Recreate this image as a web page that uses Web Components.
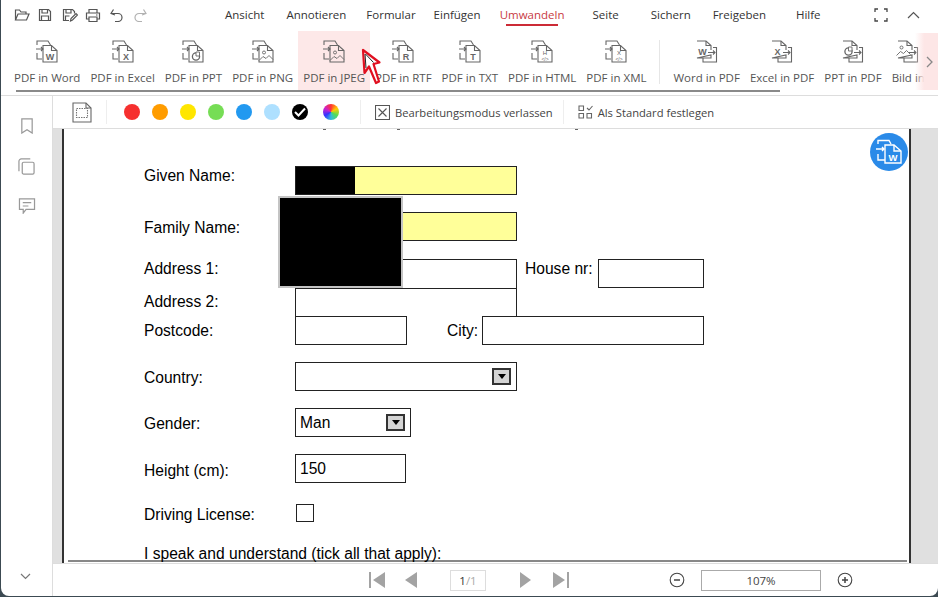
<!DOCTYPE html>
<html lang="de">
<head>
<meta charset="utf-8">
<title>PDF</title>
<style>
  html, body { margin: 0; height: 597px; overflow: hidden; background: #3c4a52; }
  body { font-family: "Open Sans", "Liberation Sans", sans-serif; font-size: 11.5px; color: #444; }
</style>
</head>
<body>
<app-window>
  <top-bar>
    <menu-tab style="margin-left:9px">Ansicht</menu-tab>
    <menu-tab style="margin-left:22px">Annotieren</menu-tab>
    <menu-tab style="margin-left:20px">Formular</menu-tab>
    <menu-tab style="margin-left:18px">Einfügen</menu-tab>
    <menu-tab style="margin-left:19px" active>Umwandeln</menu-tab>
    <menu-tab style="margin-left:28px">Seite</menu-tab>
    <menu-tab style="margin-left:32px">Sichern</menu-tab>
    <menu-tab style="margin-left:22px">Freigeben</menu-tab>
    <menu-tab style="margin-left:30px">Hilfe</menu-tab>
  </top-bar>
  <convert-ribbon>
    <ribbon-item glyph="W">PDF in Word</ribbon-item>
    <ribbon-item glyph="X">PDF in Excel</ribbon-item>
    <ribbon-item glyph="ppt">PDF in PPT</ribbon-item>
    <ribbon-item glyph="img">PDF in PNG</ribbon-item>
    <ribbon-item glyph="img" active>PDF in JPEG</ribbon-item>
    <ribbon-item glyph="R">PDF in RTF</ribbon-item>
    <ribbon-item glyph="T">PDF in TXT</ribbon-item>
    <ribbon-item glyph="code" mark="H">PDF in HTML</ribbon-item>
    <ribbon-item glyph="code" mark="X">PDF in XML</ribbon-item>
    <ribbon-sep></ribbon-sep>
    <ribbon-item glyph="W" reverse>Word in PDF</ribbon-item>
    <ribbon-item glyph="X" reverse>Excel in PDF</ribbon-item>
    <ribbon-item glyph="ppt" reverse>PPT in PDF</ribbon-item>
    <ribbon-item glyph="img" reverse>Bild in</ribbon-item>
  </convert-ribbon>
  <work-area>
    <side-rail slot="rail"></side-rail>
    <edit-toolbar></edit-toolbar>
    <doc-view>
      <form-row style="height:29px" shift="10">Given Name:
        <form-field slot="fields" width="222" fill="#ffff99"><span style="display:block;width:59px;height:100%;background:#000"></span></form-field>
      </form-row>
      <form-row style="height:29px;margin-top:17px" shift="-2">Family Name:
        <form-field slot="fields" width="222" fill="#ffff99"></form-field>
      </form-row>
      <form-row style="height:29px;margin-top:18px" shift="10">Address 1:
        <form-field slot="fields" width="222" open></form-field>
        <form-label slot="fields" style="margin-left:8px;width:73px" shift="10">House nr:</form-label>
        <form-field slot="fields" width="106"></form-field>
      </form-row>
      <form-row style="height:28px">Address 2:
        <form-field slot="fields" width="222" open></form-field>
      </form-row>
      <form-row style="height:29px">Postcode:
        <form-field slot="fields" width="112"></form-field>
        <form-label slot="fields" style="margin-left:40px;width:35px">City:</form-label>
        <form-field slot="fields" width="222"></form-field>
      </form-row>
      <form-row style="height:29px;margin-top:17px" shift="-2">Country:
        <form-field slot="fields" width="222" select></form-field>
      </form-row>
      <form-row style="height:29px;margin-top:17px" shift="-2">Gender:
        <form-field slot="fields" width="116" select>Man</form-field>
      </form-row>
      <form-row style="height:29px;margin-top:17px" shift="-4">Height (cm):
        <form-field slot="fields" width="111">150</form-field>
      </form-row>
      <form-row style="height:18px;margin-top:21px" shift="-4">Driving License:
        <form-field slot="fields" width="18" style="margin-left:1px"></form-field>
      </form-row>
      <form-row style="height:18px;margin-top:23px">I speak and understand (tick all that apply):</form-row>
    </doc-view>
    <pager-bar></pager-bar>
  </work-area>
  <red-cursor></red-cursor>
</app-window>

<script>
const STROKE = '#666';

// document glyphs that sit on the page of a convert icon
function glyphSvg(kind, mark, x, y) {
  if (kind === 'ppt') {
    return `<circle cx="${x}" cy="${y - 3}" r="3.6" fill="none" stroke="${STROKE}" stroke-width="1.3"/>
      <path d="M${x} ${y - 7.5}h3.500v4h-3.500z" fill="#fff" stroke="${STROKE}" stroke-width=".9"/>`;
  }
  if (kind === 'img') {
    return `<circle cx="${x - 2}" cy="${y - 7}" r="1.5" fill="none" stroke="${STROKE}" stroke-width=".9"/>
      <path d="M${x - 7} ${y + 1}l4-4 3 2 3-3 4 4" fill="none" stroke="${STROKE}" stroke-width=".9"/>`;
  }
  if (kind === 'code') {
    return `<text x="${x}" y="${y - 5}" font-size="6" text-anchor="middle" fill="${STROKE}" stroke="none" font-family="Liberation Sans">${mark}</text>
      <text x="${x}" y="${y + 1}" font-size="5" text-anchor="middle" fill="${STROKE}" stroke="none" font-family="Liberation Sans">&lt;/&gt;</text>`;
  }
  return `<text x="${x}" y="${y}" font-size="9" font-weight="700" text-anchor="middle" fill="${STROKE}" stroke="none" font-family="Liberation Sans">${kind}</text>`;
}

function convertIcon(kind, mark, reverse) {
  const common = `width="24" height="24" viewBox="0 0 24 24" fill="none" stroke="${STROKE}" stroke-width="1.1"`;
  if (reverse) {
    return `<svg ${common}>
      <path d="M2 1h9l5 4.500V10M16 15v3H2z"/><path d="M11 1v4.500h5"/>
      <path d="M13 12.500h7M18 10.500l2 2-2 2"/>
      <path d="M18 7.500h3.500V22H8v-4"/>
      ${glyphSvg(kind, mark, 7.5, 14.5)}
    </svg>`;
  }
  return `<svg ${common}>
    <path d="M2 5V1h11l2.500 4M2 13v6h5"/>
    <path d="M1 9h7M6 7l2 2-2 2"/>
    <path d="M8 5.500h8.500l5.500 5V22H8z"/><path d="M16.500 5.500v5H22"/>
    ${glyphSvg(kind, mark, 15, 19.5)}
  </svg>`;
}

class AppWindow extends HTMLElement {
  constructor() {
    super();
    this.attachShadow({ mode: 'open' });
    this.shadowRoot.innerHTML = `
      <style>
        :host {
          display: flex;
          flex-direction: column;
          position: relative;
          width: 937px;
          height: 596px;
          margin-left: 1px;
          background: #fff;
          border-radius: 0 0 8px 8px;
          overflow: hidden;
        }
      </style>
      <slot></slot>`;
  }
}

class TopBar extends HTMLElement {
  constructor() {
    super();
    this.attachShadow({ mode: 'open' });
    const s = `fill="none" stroke="#555" stroke-width="1.2"`;
    this.shadowRoot.innerHTML = `
      <style>
        :host { display: flex; align-items: center; height: 30px; flex: none; }
        .quick { display: flex; align-items: center; width: 215px; padding-left: 13px; box-sizing: border-box; height: 100%; }
        .quick svg { display: block; flex: none; }
        .tabs { display: flex; height: 100%; }
        .win { margin-left: auto; display: flex; align-items: center; gap: 19px; padding-right: 18px; }
        svg { display: block; }
      </style>
      <div class="quick">
        <svg width="16" height="14" viewBox="0 0 16 14" ${s}><path d="M1.500 12V2h4l1.500 2h5v2M1.500 12l2.500-6h11l-2.500 6z"/></svg>
        <svg style="margin-left:8px" width="14" height="14" viewBox="0 0 14 14" ${s}><path d="M1.500 1.500h9l2 2v9h-11z"/><path d="M4 1.500v3.500h5.500v-3.500M3.500 12.500v-4.500h7v4.500"/></svg>
        <svg style="margin-left:10px" width="16" height="14" viewBox="0 0 16 14" ${s}><path d="M7 12.500H1.500v-11h9l2 2v2"/><path d="M4 1.500v3.500h5V1.500M3.500 12V8h4"/><path d="M8.500 13l.5-2.500 5-5 1.500 1.500-5 5z"/></svg>
        <svg style="margin-left:7px" width="16" height="15" viewBox="0 0 16 15" ${s}><path d="M4 5V1.500h8V5M4 11H1.500V5h13v6H12"/><path d="M4 9h8v4.500H4z"/><path d="M11 7h1.500"/></svg>
        <svg style="margin-left:9px" width="13" height="14" viewBox="0 0 13 14" ${s}><path d="M1 5.500h7a4 4 0 0 1 0 8H5M3.500 1.500L1 5.500 5 7"/></svg>
        <svg style="margin-left:11px;opacity:.45" width="13" height="14" viewBox="0 0 13 14" ${s}><path d="M12 5.500H5a4 4 0 0 0 0 8h3M9.500 1.500l2.500 4L8 7"/></svg>
      </div>
      <div class="tabs"><slot></slot></div>
      <div class="win">
        <svg width="14" height="14" viewBox="0 0 14 14" fill="none" stroke="#444" stroke-width="1.3"><path d="M1 4V1h3M10 1h3v3M13 10v3h-3M4 13H1v-3"/></svg>
        <svg width="13" height="8" viewBox="0 0 13 8" fill="none" stroke="#555" stroke-width="1.2"><path d="M1 7l5.500-5.500L12 7"/></svg>
      </div>`;
  }
}

class MenuTab extends HTMLElement {
  constructor() {
    super();
    this.attachShadow({ mode: 'open' });
    this.shadowRoot.innerHTML = `
      <style>
        :host { display: block; position: relative; line-height: 30px; color: #333; white-space: nowrap; }
        :host([active]) { color: #c83a44; }
        :host([active])::after {
          content: ""; position: absolute; left: 6px; right: 6px; top: 24px; height: 2px; background: #cc2b36;
        }
      </style>
      <slot></slot>`;
  }
}

class ConvertRibbon extends HTMLElement {
  constructor() {
    super();
    this.attachShadow({ mode: 'open' });
    this.shadowRoot.innerHTML = `
      <style>
        :host {
          display: flex;
          flex-direction: column;
          flex: none;
          position: relative;
          height: 66px;
          box-sizing: border-box;
          border-bottom: 1px solid #ddd;
          padding-top: 1px;
        }
        .row { display: flex; height: 59px; padding-left: 8px; overflow: hidden; }
        .bar { width: 764px; height: 2px; margin-left: 15px; background: #8a8a8a; flex: none; }
        .more {
          position: absolute; right: 0; top: 3px; width: 23px; height: 57px;
          display: flex; align-items: center; justify-content: flex-end; padding-right: 5px; box-sizing: border-box;
          background: linear-gradient(90deg, rgba(253,230,230,0), #fde6e6 40%);
        }
      </style>
      <div class="row"><slot></slot></div>
      <div class="bar"></div>
      <div class="more">
        <svg width="7" height="12" viewBox="0 0 7 12" fill="none" stroke="#888" stroke-width="1.3"><path d="M1 1l5 5-5 5"/></svg>
      </div>`;
  }
}

class RibbonItem extends HTMLElement {
  constructor() {
    super();
    this.attachShadow({ mode: 'open' });
  }
  connectedCallback() {
    const icon = convertIcon(this.getAttribute('glyph'), this.getAttribute('mark'), this.hasAttribute('reverse'));
    this.shadowRoot.innerHTML = `
      <style>
        :host {
          display: flex; flex-direction: column; align-items: center; flex: none;
          padding: 9px 5px 0; box-sizing: border-box; height: 59px;
          color: #555; white-space: nowrap;
        }
        :host([active]) { background: #fde8e8; }
        svg { display: block; margin-bottom: 6px; }
        .t { line-height: 16px; }
      </style>
      ${icon}<div class="t"><slot></slot></div>`;
  }
}

class RibbonSep extends HTMLElement {
  constructor() {
    super();
    this.attachShadow({ mode: 'open' });
    this.shadowRoot.innerHTML = `
      <style>
        :host { display: block; flex: none; width: 1px; height: 44px; margin: 9px 8px 0; background: #e6e6e6; }
      </style>`;
  }
}

class WorkArea extends HTMLElement {
  constructor() {
    super();
    this.attachShadow({ mode: 'open' });
    this.shadowRoot.innerHTML = `
      <style>
        :host { display: flex; flex: 1; min-height: 0; }
        .main { flex: 1; min-width: 0; display: flex; flex-direction: column; }
      </style>
      <slot name="rail"></slot>
      <div class="main"><slot></slot></div>`;
  }
}

class SideRail extends HTMLElement {
  constructor() {
    super();
    this.attachShadow({ mode: 'open' });
    const s = `fill="none" stroke="#999" stroke-width="1.3"`;
    this.shadowRoot.innerHTML = `
      <style>
        :host {
          display: flex; flex-direction: column; align-items: center; flex: none;
          width: 52px; box-sizing: border-box; border-right: 1px solid #ddd;
          padding: 22px 0 0 0;
        }
        svg { display: block; }
        .end { margin-top: auto; margin-bottom: 16px; margin-right: 2px; }
      </style>
      <svg width="14" height="16" viewBox="0 0 14 17" ${s}><path d="M1.500 1h11v15l-5.500-3.500L1.500 16z"/></svg>
      <svg style="margin-top:24px" width="17" height="17" viewBox="0 0 18 18" ${s}><path d="M1 14V3.500A2.500 2.500 0 0 1 3.500 1H13"/><rect x="4.500" y="4.500" width="12.500" height="12.500" rx="1.500"/></svg>
      <svg style="margin-top:23px" width="18" height="16" viewBox="0 0 18 17" ${s}><path d="M1 1h16v11H8l-3 4v-4H1z"/><path d="M4.500 5h9M4.500 8.500h6"/></svg>
      <svg class="end" width="11" height="7" viewBox="0 0 11 7" fill="none" stroke="#777" stroke-width="1.2"><path d="M1 1l4.500 4.500L10 1"/></svg>`;
  }
}

class EditToolbar extends HTMLElement {
  constructor() {
    super();
    this.attachShadow({ mode: 'open' });
    const dots = ['#f6302f', '#ff9c00', '#ffe600', '#76dd55', '#2299f0', '#aee0ff'];
    this.shadowRoot.innerHTML = `
      <style>
        :host {
          display: flex; align-items: center; flex: none; height: 33px; box-sizing: border-box;
          border-bottom: 1px solid #ddd; padding-left: 19px; color: #444; white-space: nowrap; font-size: 11.2px;
        }
        svg { display: block; flex: none; }
        .sep { width: 1px; height: 24px; background: #eee; flex: none; }
        .dot { width: 16px; height: 16px; border-radius: 50%; margin-right: 12px; flex: none; }
        .check { background: #000; display: flex; align-items: center; justify-content: center; }
        .wheel { margin-left: 3px; margin-right: 0; background: conic-gradient(#f33, #fc0, #5d5, #3bd, #33f, #c2c, #f33); }
      </style>
      <svg width="20" height="21" viewBox="0 0 20 21" fill="none" stroke="#666" stroke-width="1.1"><path d="M1 1h13l5 5v14H1z"/><path d="M14 1v5h5"/><path d="M4.500 6.500h11v9h-11z" stroke-dasharray="1.500 1" stroke="#777"/></svg>
      <div class="sep" style="margin:0 17px 0 14px"></div>
      ${dots.map(c => `<div class="dot" style="background:${c}"></div>`).join('')}
      <div class="dot check"><svg width="12" height="10" viewBox="0 0 12 10" fill="none" stroke="#fff" stroke-width="2"><path d="M1 5l3.500 3.500L11 1.500"/></svg></div>
      <div class="dot wheel"></div>
      <div class="sep" style="margin:0 14px 0 21px"></div>
      <svg width="15" height="15" viewBox="0 0 15 15" fill="none" stroke="#555" stroke-width="1.1"><path d="M.5.5h14v14H.5zM3.500 3.500l8 8M11.500 3.500l-8 8"/></svg>
      <span style="margin-left:5px">Bearbeitungsmodus verlassen</span>
      <div class="sep" style="margin:0 14px 0 10px"></div>
      <svg width="15" height="14" viewBox="0 0 15 14" fill="none" stroke="#666" stroke-width="1.1"><path d="M1 1h4.500v4.500H1zM1 8.500h4.500V13H1zM9 8.500h4.500V13H9zM9 3l2 2 3.500-4"/></svg>
      <span style="margin-left:5px">Als Standard festlegen</span>`;
  }
}

class DocView extends HTMLElement {
  constructor() {
    super();
    this.attachShadow({ mode: 'open' });
    this.shadowRoot.innerHTML = `
      <style>
        :host {
          display: flex; flex: 1; min-height: 0; position: relative; box-sizing: border-box;
          background: #e0e0e0; padding: 0 27px 0 9px;
        }
        .page {
          flex: 1; position: relative; overflow: hidden; box-sizing: border-box;
          background:
            linear-gradient(#666,#666) 259px 0/3px 1px no-repeat,
            linear-gradient(#666,#666) 333px 0/3px 1px no-repeat,
            linear-gradient(#666,#666) 511px 0/3px 1px no-repeat,
            #fff;
          border-left: 2px solid #333; border-right: 2px solid #333;
          padding: 37px 0 0 80px;
          font-family: "Liberation Sans", Arial, sans-serif; font-size: 15.6px; color: #000;
        }
        .rule { position: absolute; left: 4px; right: 2px; top: 431px; height: 2px; background: #888; }
        .mask {
          position: absolute; left: 214px; top: 67px; width: 125px; height: 92px; box-sizing: border-box;
          background: #000; border: 2px solid #c4c4c4;
        }
        .fab {
          position: absolute; left: 806px; top: 4px; width: 38px; height: 38px; border-radius: 50%;
          background: #2a8ae8; display: flex; align-items: center; justify-content: center;
        }
      </style>
      <div class="page">
        <div class="rule"></div>
        <slot></slot>
        <div class="mask"></div>
        <div class="fab">
          <svg width="28" height="26" viewBox="0 0 28 26" fill="none" stroke="#fff" stroke-width="1.4">
            <path d="M3 5V1.500h11l2 3.500M3 15v6h7"/><path d="M1 10h8M7 8l2 2-2 2"/>
            <path d="M10 6h9l7 6v12H10z"/><path d="M19 6v6h7"/>
            <text x="18" y="22" font-size="9.500" font-weight="700" text-anchor="middle" fill="#fff" stroke="none" font-family="Liberation Sans">W</text>
          </svg>
        </div>
      </div>`;
  }
}

class FormRow extends HTMLElement {
  constructor() {
    super();
    this.attachShadow({ mode: 'open' });
  }
  connectedCallback() {
    // shift > 0 lifts the label, shift < 0 drops it
    const shift = Number(this.getAttribute('shift') || 0);
    this.shadowRoot.innerHTML = `
      <style>
        :host { display: flex; align-items: stretch; white-space: nowrap; position: relative; }
        .label {
          width: 151px; flex: none; display: flex; align-items: center; box-sizing: border-box;
          padding-bottom: ${Math.max(shift, 0)}px; padding-top: ${Math.max(-shift, 0)}px;
        }
        .fields { display: flex; align-items: stretch; }
      </style>
      <div class="label"><slot></slot></div>
      <div class="fields"><slot name="fields"></slot></div>`;
  }
}

class FormLabel extends HTMLElement {
  constructor() {
    super();
    this.attachShadow({ mode: 'open' });
  }
  connectedCallback() {
    const shift = this.getAttribute('shift') || 0;
    this.shadowRoot.innerHTML = `
      <style>
        :host { display: flex; align-items: center; flex: none; padding-bottom: ${shift}px; box-sizing: border-box; }
      </style>
      <slot></slot>`;
  }
}

class FormField extends HTMLElement {
  constructor() {
    super();
    this.attachShadow({ mode: 'open' });
  }
  connectedCallback() {
    const fill = this.getAttribute('fill') || '#fff';
    const arrow = this.hasAttribute('select')
      ? `<div class="drop"><svg width="8" height="5" viewBox="0 0 8 5"><path d="M0 0h8L4 5z" fill="#000"/></svg></div>` : '';
    this.shadowRoot.innerHTML = `
      <style>
        :host {
          display: flex; align-items: center; flex: none; box-sizing: border-box;
          width: ${this.getAttribute('width')}px; height: 100%;
          border: 1px solid #222; background: ${fill};
        }
        :host([open]) { border-bottom: 0; }
        .text { flex: 1; min-width: 0; height: 100%; display: flex; align-items: center; padding-left: 4px; }
        ::slotted(span) { margin-left: -4px; }
        .drop {
          width: 19px; height: 17px; box-sizing: border-box; border: 2px solid #333; background: #d4d4d4;
          display: flex; align-items: center; justify-content: center; margin-right: 5px; flex: none;
        }
      </style>
      <div class="text"><slot></slot></div>${arrow}`;
  }
}

class PagerBar extends HTMLElement {
  constructor() {
    super();
    this.attachShadow({ mode: 'open' });
    this.shadowRoot.innerHTML = `
      <style>
        :host {
          display: flex; align-items: center; flex: none; height: 33px; box-sizing: border-box;
          border-top: 1px solid #ddd; padding-left: 316px; color: #444;
        }
        svg { display: block; flex: none; }
        .page {
          width: 36px; height: 21px; box-sizing: border-box; border: 1px solid #ddd; margin: 0 34px 0 33px;
          display: flex; align-items: center; justify-content: center; color: #333; flex: none;
        }
        .page span { color: #aaa; }
        .zoom {
          width: 120px; height: 21px; box-sizing: border-box; border: 1px solid #aaa; margin: 0 16px;
          display: flex; align-items: center; justify-content: center; flex: none;
        }
      </style>
      <svg width="17" height="16" viewBox="0 0 17 16" fill="#a3a3a3"><path d="M0 0h2v16H0zM16 0v16L4 8z"/></svg>
      <svg style="margin-left:19px" width="12" height="16" viewBox="0 0 12 16" fill="#a3a3a3"><path d="M12 0v16L0 8z"/></svg>
      <div class="page">1<span>/1</span></div>
      <svg width="11" height="16" viewBox="0 0 11 16" fill="#a3a3a3"><path d="M0 0v16l11-8z"/></svg>
      <svg style="margin-left:22px" width="16" height="16" viewBox="0 0 16 16" fill="#a3a3a3"><path d="M14 0h2v16h-2zM0 0v16l12-8z"/></svg>
      <svg style="margin-left:100px" width="16" height="16" viewBox="0 0 16 16" fill="none" stroke="#444" stroke-width="1.1"><circle cx="8" cy="8" r="6.800"/><path d="M5 8h6" stroke-width="1.500"/></svg>
      <div class="zoom">107%</div>
      <svg width="16" height="16" viewBox="0 0 16 16" fill="none" stroke="#444" stroke-width="1.1"><circle cx="8" cy="8" r="6.800"/><path d="M5 8h6M8 5v6" stroke-width="1.500"/></svg>`;
  }
}

class RedCursor extends HTMLElement {
  constructor() {
    super();
    this.attachShadow({ mode: 'open' });
    this.shadowRoot.innerHTML = `
      <style>
        :host { display: block; position: absolute; left: 359px; top: 47px; width: 24px; height: 40px; }
        svg { display: block; }
      </style>
      <svg width="24" height="40" viewBox="0 0 24 40">
        <path d="M3 3l1.500 23L9 19.500 16 36l3-1.500L13.500 17l6-1.500z" fill="#fff" stroke="#e01020" stroke-width="2.200" stroke-linejoin="round"/>
        <path d="M5 7l1 14M5.500 7l8 8.500" fill="none" stroke="#222" stroke-width="1"/>
      </svg>`;
  }
}

customElements.define('app-window', AppWindow);
customElements.define('top-bar', TopBar);
customElements.define('menu-tab', MenuTab);
customElements.define('convert-ribbon', ConvertRibbon);
customElements.define('ribbon-item', RibbonItem);
customElements.define('ribbon-sep', RibbonSep);
customElements.define('work-area', WorkArea);
customElements.define('side-rail', SideRail);
customElements.define('edit-toolbar', EditToolbar);
customElements.define('doc-view', DocView);
customElements.define('form-row', FormRow);
customElements.define('form-label', FormLabel);
customElements.define('form-field', FormField);
customElements.define('pager-bar', PagerBar);
customElements.define('red-cursor', RedCursor);
</script>
</body>
</html>
